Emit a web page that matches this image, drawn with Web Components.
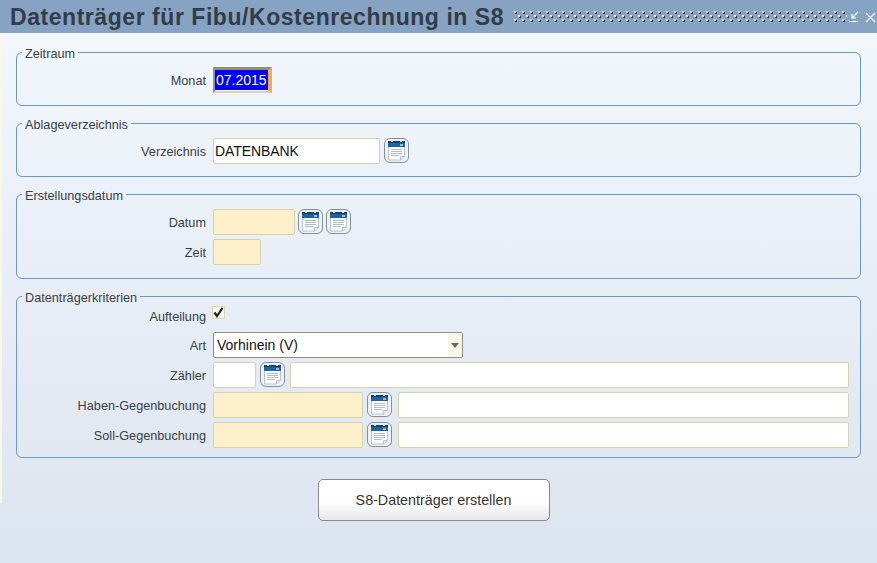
<!DOCTYPE html>
<html><head><meta charset="utf-8"><style>
html,body{margin:0;padding:0;height:100%;overflow:hidden}
body{font-family:"Liberation Sans",Arial,sans-serif;font-size:13px;color:#3a3f46}
</style></head><body>
<app-window heading="Datenträger für Fibu/Kostenrechnung in S8">
  <form-group legend="Zeitraum" style="--h:63px">
    <form-row label="Monat"><text-field selected value="07.2015"></text-field></form-row>
  </form-group>
  <form-group legend="Ablageverzeichnis" style="--h:63px">
    <form-row label="Verzeichnis"><text-field w="167" value="DATENBANK"></text-field><cal-button style="margin-left:4px"></cal-button></form-row>
  </form-group>
  <form-group legend="Erstellungsdatum" style="--h:94px">
    <form-row label="Datum"><text-field w="82" req></text-field><cal-button style="margin-left:3px"></cal-button><cal-button style="margin-left:3px"></cal-button></form-row>
    <form-row label="Zeit"><text-field w="48" req></text-field></form-row>
  </form-group>
  <form-group legend="Datenträgerkriterien" style="--h:171px;--p:-1px">
    <form-row label="Aufteilung" compact><check-box></check-box></form-row>
    <form-row label="Art"><select-field w="250" value="Vorhinein (V)"></select-field></form-row>
    <form-row label="Zähler"><text-field w="43"></text-field><cal-button style="margin-left:4px"></cal-button><text-field w="559" style="margin-left:5px"></text-field></form-row>
    <form-row label="Haben-Gegenbuchung"><text-field w="150" req></text-field><cal-button style="margin-left:4px"></cal-button><text-field w="451" style="margin-left:6px"></text-field></form-row>
    <form-row label="Soll-Gegenbuchung"><text-field w="150" req></text-field><cal-button style="margin-left:4px"></cal-button><text-field w="451" style="margin-left:6px"></text-field></form-row>
  </form-group>
  <action-button>S8-Datenträger erstellen</action-button>
</app-window>
<script>
function def(name, css, html){
  customElements.define(name, class extends HTMLElement{
    connectedCallback(){
      if(this.shadowRoot) return;
      const r=this.attachShadow({mode:'open'});
      r.innerHTML='<style>'+css+'</style>'+(typeof html==='function'?html(this):html);
    }
  });
}
function esc(s){return (s||'').replace(/&/g,'&amp;').replace(/</g,'&lt;')}
def('app-window',`
:host{display:flex;flex-direction:column;width:877px;height:563px;overflow:hidden;background:linear-gradient(#fbf8e2,#fbf8e2) 0 33px/2px 470px no-repeat,linear-gradient(#f3f8fd,#dce4ef)}
.bar{flex:none;height:33px;background:#87a3c3;display:flex;align-items:center;padding-left:10px;gap:10px;box-sizing:border-box}
h1{margin:0;font:bold 23px/33px "Liberation Sans",Arial,sans-serif;color:#333c47;white-space:nowrap;letter-spacing:.55px;padding-top:1px}
.grip{flex:none;width:333px;height:13px;display:block}
.ctl{flex:none;display:flex;gap:4px;margin-left:-8px}
.main{flex:1;padding:10px 16px 0;display:flex;flex-direction:column;gap:8px}
`,h=>`<div class="bar"><h1>${esc(h.getAttribute('heading'))}</h1>
<svg class="grip" viewBox="0 0 333 13"><defs><pattern id="g" width="8" height="8" patternUnits="userSpaceOnUse"><rect x="1" y="2" width="2" height="2" fill="#2d3540"/><rect x="5" y="6" width="2" height="2" fill="#2d3540"/><rect x="0" y="1" width="2" height="2" fill="#e6e8d8"/><rect x="4" y="5" width="2" height="2" fill="#e6e8d8"/></pattern></defs><rect width="333" height="13" fill="url(#g)"/></svg>
<div class="ctl"><svg width="12" height="12" viewBox="0 0 12 12" fill="none" stroke="#fff" stroke-width="1.200"><path d="M0 10.500h9M9 1 3.500 6.500M3 3v4h4"/></svg><svg width="11" height="12" viewBox="0 0 11 12" fill="none" stroke="#fff" stroke-width="1.100"><path d="M1 2l9 9M10 2l-9 9"/></svg></div>
</div><div class="main"><slot></slot></div>`);
def('form-group',`
:host{display:block;box-sizing:border-box;height:var(--h)}
fieldset{margin:0;height:100%;box-sizing:border-box;border:1px solid #6d95c7;border-radius:6px;padding:0;display:flex;flex-direction:column}
legend{margin-left:5px;padding:4px 3px 0;font-size:12.700px;line-height:14px;color:#3a3f46}
.c{display:flex;flex-direction:column;gap:4px;margin-top:var(--p,6px)}
`,h=>`<fieldset><legend>${esc(h.getAttribute('legend'))}</legend><div class="c"><slot></slot></div></fieldset>`);
def('form-row',`
:host{display:flex;align-items:flex-start;height:26px}
:host([compact]){height:24px}
.l{flex:none;align-self:center;width:189px;margin-right:7px;text-align:right;font-size:12.700px;white-space:nowrap;padding-top:1px}
`,h=>`<div class="l">${esc(h.getAttribute('label'))}</div><slot></slot>`);
def('text-field',`
:host{display:block;flex:none;box-sizing:border-box;height:26px;border:1px solid #d4d4a8;border-radius:2px;background:#fff;font-size:14px;line-height:25px;padding-left:1px;color:#111;letter-spacing:-.1px}
:host([req]){background:#fdefc9}
:host([selected]){width:59px;border-width:3px 4px 2px 2px;border-style:solid;border-color:#8f8f78 #f5a95c #d8d8b0 #8f8fa0;border-radius:0;padding:0;background:#fff}
span{display:block}
:host([selected]) span{background:#0000ff;color:#fff;line-height:20px;height:20px;padding-left:1px;letter-spacing:0}
`,h=>{if(h.hasAttribute('w'))h.style.width=h.getAttribute('w')+'px';return `<span>${esc(h.getAttribute('value'))}</span>`});
def('select-field',`
:host{display:flex;flex:none;box-sizing:border-box;height:26px;border:1px solid #8f8f7a;border-radius:2px;background:#fff;font-size:14px;line-height:25px;padding-left:3px;color:#111;justify-content:space-between}
.a{width:14px;display:flex;align-items:center;justify-content:center;background:#f5f5ec}
`,h=>{h.style.width=h.getAttribute('w')+'px';return `<span>${esc(h.getAttribute('value'))}</span><span class="a"><svg width="8" height="5"><path d="M0 0h8L4 5z" fill="#666"/></svg></span>`});
def('cal-button',`
:host{display:block;flex:none;width:25px;height:25px;box-sizing:border-box;border:1px solid #8a8f96;border-radius:6px;background:#eef1f5}
svg{display:block;margin:1px}
`,`<svg width="21" height="21" viewBox="0 0 21 21"><path d="M2.500 3.500h16v13l-4 3.500h-12z" fill="#fff" stroke="#b8c2ce"/><path d="M14.500 20v-3.500h4" fill="#e4e9ef" stroke="#b8c2ce"/><rect x="2" y="3" width="17" height="4" fill="#1f64a0"/><rect x="2" y="1" width="17" height="2" fill="#123f70"/><rect x="5" y="1" width="2" height="1" fill="#dfe6ee"/><rect x="14" y="1" width="2" height="1" fill="#dfe6ee"/><rect x="14" y="4" width="3" height="2" fill="#8cbce0"/><path d="M5 9.500h11M5 11.500h11M5 13.500h11M5 15.500h8" stroke="#b4bcc8"/></svg>`);
def('check-box',`
:host{display:block;flex:none;width:13px;height:13px;box-sizing:border-box;margin:2px 0 0 -1px;background:#f8f8ee;border:1px solid #d8d8b8}
svg{display:block}
`,`<svg width="11" height="11" viewBox="0 0 11 11"><path d="M1.500 5.500 4 9 9.500 1" fill="none" stroke="#222" stroke-width="2.200"/></svg>`);
def('action-button',`
:host{display:flex;align-self:center;flex:none;align-items:center;justify-content:center;box-sizing:border-box;width:232px;height:42px;margin:13px 10px 0 0;border:1px solid #85898e;border-radius:5px;background:linear-gradient(#fff 55%,#e6e6e6);font-size:14.300px;color:#333}
`,`<slot></slot>`);
</script></body></html>
